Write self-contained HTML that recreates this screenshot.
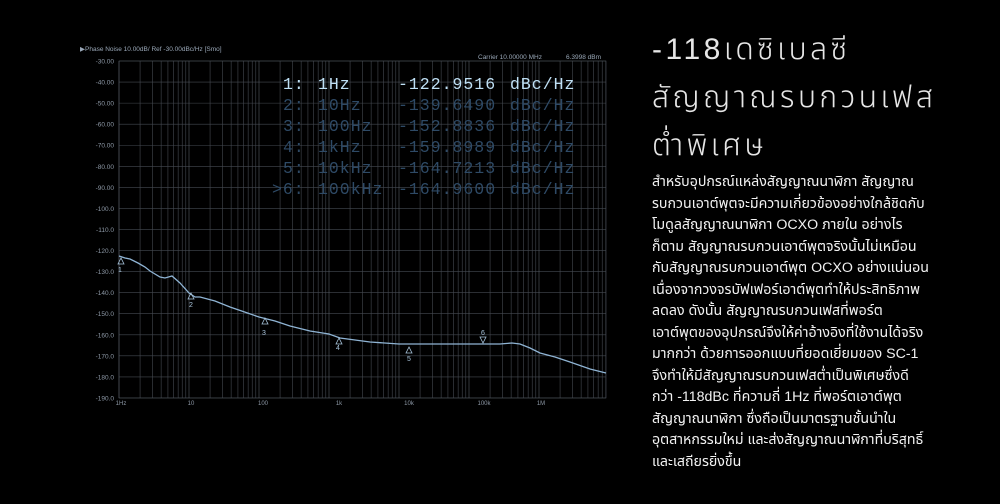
<!DOCTYPE html>
<html><head><meta charset="utf-8"><style>
html,body{margin:0;padding:0;background:#000;width:1000px;height:504px;overflow:hidden}
body{position:relative;font-family:"Liberation Sans","Noto Sans Thai","DejaVu Sans",sans-serif}
#title{position:absolute;left:652px;top:26px;color:#e6e6e6;font-size:30px;line-height:48px;letter-spacing:3.5px;font-weight:300}
#body{position:absolute;left:652px;top:172px;color:#f2f2f2;font-size:14.2px;line-height:21.5px;white-space:nowrap}
svg{position:absolute;left:0;top:0}
</style></head><body>
<svg width="640" height="504" viewBox="0 0 640 504">
<g font-family="Liberation Sans,sans-serif" font-size="6.5" fill="#9aa8b8">
<text x="80" y="51">▶Phase Noise 10.00dB/ Ref -30.00dBc/Hz [Smo]</text>
<text x="478" y="59">Carrier 10.00000 MHz</text><text x="566" y="59">6.3998 dBm</text>
</g>
<g id="grid" stroke="#454a52" stroke-width="0.6" fill="none">
<rect x="119" y="61" width="487" height="337"/>
</g>
<g font-family="Liberation Sans,sans-serif" font-size="6.5" fill="#8d98a6" text-anchor="end" id="ylab"></g>
<g font-family="Liberation Mono,monospace" font-size="16.5" fill="#2e4a66" id="mk"></g>
<polyline fill="none" stroke="#8fb4d4" stroke-width="1.3" points="119,256 125,258 130,259 138,263 145,267 150,271 160,277 165,278 172,276 180,283 189,293 195,297 200,297 215,301 230,307 259,317 275,321 290,326 310,331 329,334 340,338 355,340 370,342 399,344 500,344 512,343 520,344 530,348 540,353 555,357 570,362 590,369 606,373"/>
<g fill="none" stroke="#a8c4dc" stroke-width="0.8">
<path d="M121,258l-3,6h6z"/><path d="M191,293l-3,6h6z"/><path d="M265,318l-3,6h6z"/><path d="M339,338l-3,6h6z"/><path d="M409,347l-3,6h6z"/><path d="M483,343l-3,-6h6z"/>
</g>
<g font-family="Liberation Sans,sans-serif" font-size="7" fill="#a8c4dc">
<text x="118" y="272">1</text><text x="189" y="307">2</text><text x="262" y="335">3</text><text x="336" y="350">4</text><text x="407" y="361">5</text><text x="481" y="335">6</text>
</g>
<g font-family="Liberation Sans,sans-serif" font-size="6" fill="#8d98a6" text-anchor="middle">
<text x="121" y="405">1Hz</text><text x="191" y="405">10</text><text x="263" y="405">100</text><text x="339" y="405">1k</text><text x="409" y="405">10k</text><text x="484" y="405">100k</text><text x="541" y="405">1M</text>
</g>
<script>
var g=document.getElementById('grid'),ns='http://www.w3.org/2000/svg',yl=document.getElementById('ylab');
function L(x1,y1,x2,y2,c){var l=document.createElementNS(ns,'line');l.setAttribute('x1',x1);l.setAttribute('y1',y1);l.setAttribute('x2',x2);l.setAttribute('y2',y2);if(c)l.setAttribute('stroke',c);g.appendChild(l);}
for(var i=0;i<=16;i++){var y=61+i*21.06;L(119,y,606,y);var t=document.createElementNS(ns,'text');t.setAttribute('x',114);t.setAttribute('y',y+2.5);var v=-30-10*i;t.textContent=i<7?v.toFixed(2):v.toFixed(1);yl.appendChild(t);}
for(var d=0;d<7;d++){for(var k=1;k<10;k++){var x=119+70*d+70*Math.log10(k);if(x>606)break;L(x,61,x,398,k==1?'#575d66':null);}}
var mk=document.getElementById('mk');
var rows=[['1:','1Hz','-122.9516'],['2:','10Hz','-139.6490'],['3:','100Hz','-152.8836'],['4:','1kHz','-159.8989'],['5:','10kHz','-164.7213'],['>6:','100kHz','-164.9600']];
rows.forEach(function(r,i){var y=89+i*21;var xs=[i==5?272:283,318,398,510];var tx=[r[0],r[1],r[2],'dBc/Hz'];
tx.forEach(function(s,j){var t=document.createElementNS(ns,'text');t.setAttribute('x',xs[j]);t.setAttribute('y',y);t.setAttribute('letter-spacing','1');if(i==0)t.setAttribute('fill','#bfe0f5');t.textContent=s;mk.appendChild(t);});});
</script>
</svg>
<div id="title">-118เดซิเบลซี<br>สัญญาณรบกวนเฟส<br>ต่ำพิเศษ</div>
<div id="body">สำหรับอุปกรณ์แหล่งสัญญาณนาฬิกา สัญญาณ<br>รบกวนเอาต์พุตจะมีความเกี่ยวข้องอย่างใกล้ชิดกับ<br>โมดูลสัญญาณนาฬิกา OCXO ภายใน อย่างไร<br>ก็ตาม สัญญาณรบกวนเอาต์พุตจริงนั้นไม่เหมือน<br>กับสัญญาณรบกวนเอาต์พุต OCXO อย่างแน่นอน<br>เนื่องจากวงจรบัฟเฟอร์เอาต์พุตทำให้ประสิทธิภาพ<br>ลดลง ดังนั้น สัญญาณรบกวนเฟสที่พอร์ต<br>เอาต์พุตของอุปกรณ์จึงให้ค่าอ้างอิงที่ใช้งานได้จริง<br>มากกว่า ด้วยการออกแบบที่ยอดเยี่ยมของ SC-1<br>จึงทำให้มีสัญญาณรบกวนเฟสต่ำเป็นพิเศษซึ่งดี<br>กว่า -118dBc ที่ความถี่ 1Hz ที่พอร์ตเอาต์พุต<br>สัญญาณนาฬิกา ซึ่งถือเป็นมาตรฐานชั้นนำใน<br>อุตสาหกรรมใหม่ และส่งสัญญาณนาฬิกาที่บริสุทธิ์<br>และเสถียรยิ่งขึ้น</div>
</body></html>
